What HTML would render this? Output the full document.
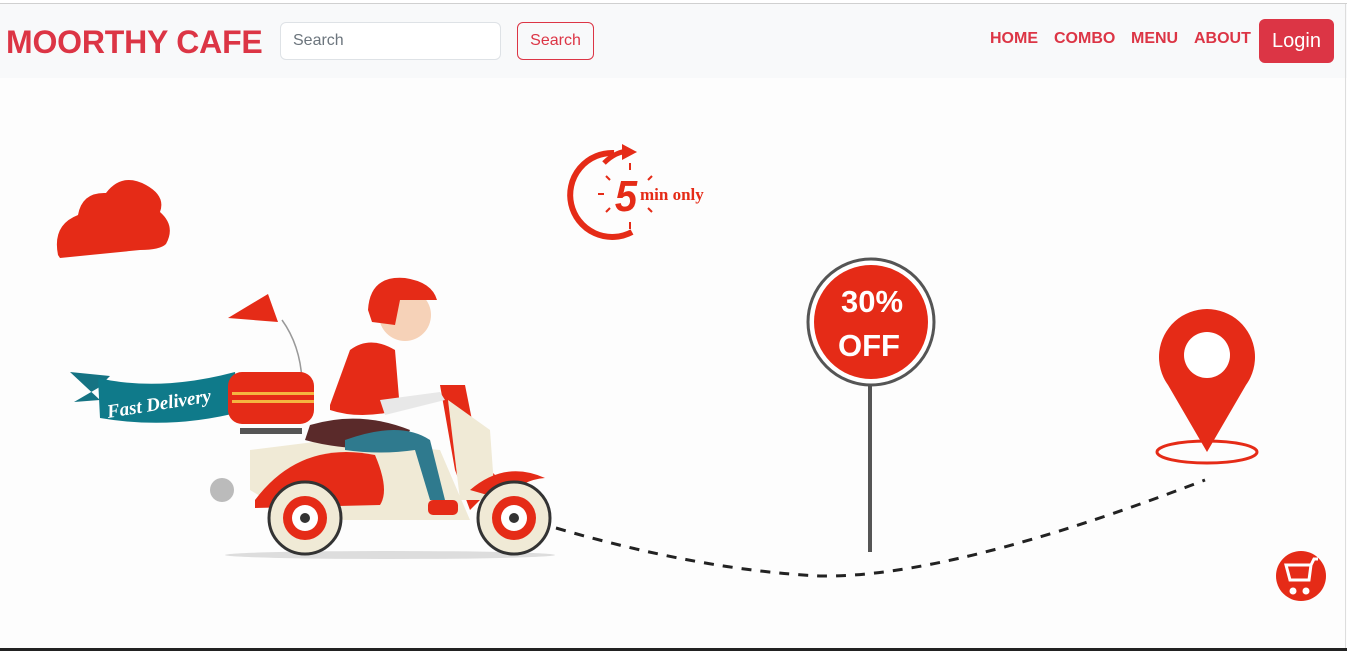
<!DOCTYPE html>
<html><head><meta charset="utf-8"><style>
*{margin:0;padding:0;box-sizing:border-box}
body{width:1347px;height:651px;overflow:hidden;background:#fdfdfd;font-family:"Liberation Sans",Arial,sans-serif;position:relative}
.top{position:absolute;left:0;top:0;width:1347px;height:4px;background:#fff;border-bottom:1px solid #d0d0d0}
nav{position:absolute;left:0;top:4px;width:1347px;height:74px;background:#f8f9fa}
.brand{position:absolute;left:6px;top:20px;font-weight:bold;font-size:32px;color:#dc3545;letter-spacing:-0.2px}
.inp{position:absolute;left:280px;top:18px;width:221px;height:38px;background:#fff;border:1px solid #dee2e6;border-radius:6px;font-size:16px;color:#6c757d;padding:9px 12px}
.btn{position:absolute;left:517px;top:18px;width:77px;height:38px;border:1px solid #dc3545;border-radius:6px;color:#dc3545;font-size:16px;text-align:center;line-height:36px}
.links{position:absolute;top:26px;font-weight:bold;font-size:16px;color:#dc3545}
.login{position:absolute;left:1259px;top:15px;width:75px;height:44px;background:#dc3545;border-radius:6px;color:#fff;font-size:20px;text-align:center;line-height:44px}
.bot{position:absolute;left:0;top:648px;width:1347px;height:3px;background:#222}
.rb{position:absolute;left:1345px;top:4px;width:1px;height:645px;background:#ddd}
svg{position:absolute;left:0;top:78px}
</style></head><body>
<div class="top"></div>
<nav>
<div class="brand">MOORTHY CAFE</div>
<div class="inp">Search</div>
<div class="btn">Search</div>
<div class="links" style="left:990px">HOME</div>
<div class="links" style="left:1054px">COMBO</div>
<div class="links" style="left:1131px">MENU</div>
<div class="links" style="left:1194px">ABOUT</div>
<div class="login">Login</div>
</nav>
<div class="rb"></div>
<svg width="1347" height="570" viewBox="0 78 1347 570">
<!-- cloud -->
<path d="M58 255 Q52 225 78 215 Q82 192 106 193 Q122 172 146 185 Q166 196 160 212 Q176 226 166 244 Q160 250 140 250 L60 258 Z" fill="#e52b17"/>
<!-- clock -->
<path d="M632 232 A42 42 0 1 1 614 153" fill="none" stroke="#e52b17" stroke-width="6"/>
<path d="M604 163 Q616 151 630 151" fill="none" stroke="#e52b17" stroke-width="5"/>
<polygon points="622,144 637,152 622,160" fill="#e52b17"/>
<g stroke="#e52b17" stroke-width="2">
<line x1="630" y1="163" x2="630" y2="170"/><line x1="630" y1="222" x2="630" y2="229"/>
<line x1="598" y1="194" x2="604" y2="194"/><line x1="606" y1="176" x2="610" y2="180"/>
<line x1="606" y1="212" x2="610" y2="208"/><line x1="652" y1="176" x2="648" y2="180"/><line x1="652" y1="212" x2="648" y2="208"/>
</g>
<text x="626" y="212" text-anchor="middle" font-family="Liberation Sans Narrow,Liberation Sans,sans-serif" font-style="italic" font-weight="bold" font-size="40" fill="#e52b17" transform="scale(1,1.1) translate(0,-20)">5</text>
<text x="640" y="200" font-family="Liberation Serif,serif" font-weight="bold" font-size="17" fill="#e52b17">min only</text>
<!-- dashed path -->
<path d="M556 528 Q700 570 820 576 Q950 578 1205 480" fill="none" stroke="#222" stroke-width="3" stroke-dasharray="10 9"/>
<!-- sign -->
<line x1="870" y1="380" x2="870" y2="552" stroke="#555" stroke-width="4"/>
<circle cx="871" cy="322" r="63" fill="#fff" stroke="#555" stroke-width="3"/>
<circle cx="871" cy="322" r="57" fill="#e52b17"/>
<text x="872" y="312" text-anchor="middle" font-weight="bold" font-size="31" fill="#fff">30%</text>
<text x="869" y="356" text-anchor="middle" font-weight="bold" font-size="31" fill="#fff">OFF</text>
<!-- pin -->
<ellipse cx="1207" cy="452" rx="50" ry="11" fill="none" stroke="#e52b17" stroke-width="3"/>
<path d="M1207 452 L1168 385 A48 48 0 1 1 1246 385 Z" fill="#e52b17"/>
<circle cx="1207" cy="355" r="23" fill="#fff"/>
<!-- cart -->
<circle cx="1301" cy="576" r="25" fill="#e52b17"/>
<path d="M1286 565 L1311 565 L1309 580 L1290 580 Z" fill="none" stroke="#fff" stroke-width="3"/>
<path d="M1311 565 L1314 559 L1318 559" fill="none" stroke="#fff" stroke-width="3"/>
<circle cx="1293" cy="591" r="3.5" fill="#fff"/><circle cx="1306" cy="591" r="3.5" fill="#fff"/>
<!-- scooter -->
<ellipse cx="390" cy="555" rx="165" ry="4" fill="#ddd"/>
<path d="M228 318 L268 294 L278 322 Z" fill="#e52b17"/>
<path d="M282 320 Q300 345 302 380" fill="none" stroke="#999" stroke-width="1.5"/>
<path d="M70 372 L110 376 L98 388 L74 402 L100 400 Z" fill="#157383"/>
<path d="M98 378 Q160 392 235 372 L240 412 Q170 430 100 418 Z" fill="#0f7a8a"/>
<rect x="228" y="372" width="86" height="52" rx="14" fill="#e52b17"/>
<text x="108" y="418" font-family="Liberation Serif,serif" font-style="italic" font-weight="bold" font-size="19" fill="#fff" transform="rotate(-9 108 418)">Fast Delivery</text>
<rect x="232" y="392" width="82" height="3" fill="#f5b540"/><rect x="232" y="400" width="82" height="3" fill="#f5b540"/>
<rect x="240" y="428" width="62" height="6" fill="#555"/>
<circle cx="222" cy="490" r="12" fill="#bbb"/>
<path d="M250 450 L330 440 L440 450 L470 520 L300 520 L250 490 Z" fill="#f0ead6"/>
<path d="M310 425 Q360 410 410 430 L400 450 Q340 450 305 440 Z" fill="#5a2a2a"/>
<path d="M255 500 Q300 440 375 455 Q390 490 380 505 L255 508 Z" fill="#e52b17"/>
<path d="M440 385 L465 385 L480 460 L500 480 L470 510 L455 470 Z" fill="#e52b17"/>
<path d="M448 400 L490 430 L495 500 L460 500 Z" fill="#f0ead6"/>
<path d="M470 490 Q505 460 545 478 Q520 480 505 500 Z" fill="#e52b17"/>
<circle cx="305" cy="518" r="36" fill="#f0ead6" stroke="#333" stroke-width="3"/>
<circle cx="305" cy="518" r="22" fill="#e52b17"/><circle cx="305" cy="518" r="13" fill="#fff"/><circle cx="305" cy="518" r="5" fill="#333"/>
<circle cx="514" cy="518" r="36" fill="#f0ead6" stroke="#333" stroke-width="3"/>
<circle cx="514" cy="518" r="22" fill="#e52b17"/><circle cx="514" cy="518" r="13" fill="#fff"/><circle cx="514" cy="518" r="5" fill="#333"/>
<!-- rider -->
<path d="M345 440 Q400 420 430 440 L445 500 L430 500 L415 450 Q380 455 345 450 Z" fill="#2f7a8e"/>
<path d="M330 405 L350 350 Q370 335 395 350 L400 410 Q360 420 330 410 Z" fill="#e52b17"/>
<path d="M380 400 L440 392 L445 400 L385 415 Z" fill="#e8e8e8"/>
<circle cx="405" cy="315" r="26" fill="#f6d2b8"/>
<path d="M368 310 Q370 275 405 278 Q432 282 437 300 L400 300 L395 325 L372 322 Z" fill="#e52b17"/>
<rect x="428" y="500" width="30" height="15" rx="5" fill="#e52b17"/>
</svg>
<div class="bot"></div>
</body></html>
